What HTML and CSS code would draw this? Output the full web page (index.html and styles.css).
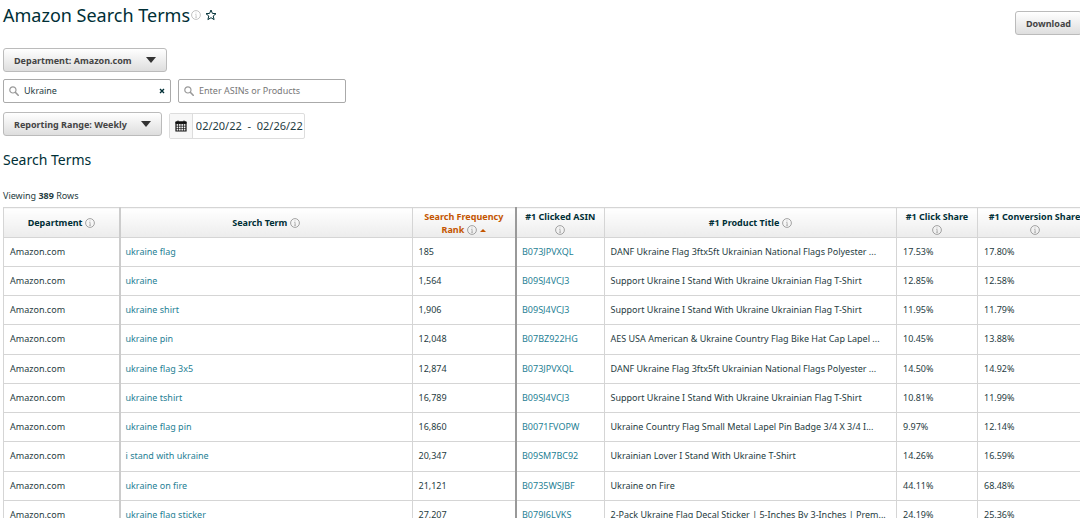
FILE: index.html
```
<!DOCTYPE html>
<html lang="en">
<head>
  <meta charset="UTF-8">
  <meta name="viewport" content="width=device-width, initial-scale=1.0">
  <title>Amazon Search Terms</title>
  <link rel="stylesheet" href="styles.css">
</head>
<body>
  <svg class="sprite" aria-hidden="true">
    <symbol id="info" viewBox="0 0 10 10">
      <circle cx="5" cy="5" r="4.4" fill="none" stroke="currentColor" stroke-width="0.9"/>
      <path d="M4.3 4.4H5.1V7.2M4.1 7.3H6M5 2.5V3.3" fill="none" stroke="currentColor" stroke-width="0.7"/>
    </symbol>
    <symbol id="search" viewBox="0 0 10 10">
      <circle cx="3.9" cy="3.9" r="3.1" fill="none" stroke="currentColor" stroke-width="1.2"/>
      <path d="M6.3 6.3L9.2 9.2" stroke="currentColor" stroke-width="1.6" stroke-linecap="round"/>
    </symbol>
  </svg>

  <div class="page">
    <header class="page-header">
      <div class="page-title">
        <h1>Amazon Search Terms</h1>
        <svg class="icon title-info"><use href="#info"/></svg>
        <svg class="star" viewBox="0 0 12 12"><path d="M6 1L7.4 4.4L11 4.7L8.2 7L9.1 10.6L6 8.7L2.9 10.6L3.8 7L1 4.7L4.6 4.4Z" fill="none" stroke="#002f36" stroke-width="1"/></svg>
      </div>
      <button class="button download" type="button">Download</button>
    </header>

    <div class="filters">
      <div class="filter-row">
        <button class="button dropdown" type="button">Department: Amazon.com <span class="caret"></span></button>
      </div>
      <div class="filter-row">
        <div class="search-box">
          <svg class="icon"><use href="#search"/></svg>
          <input type="text" aria-label="Search term" value="Ukraine">
          <button class="clear" type="button" aria-label="Clear"><svg viewBox="0 0 6 6"><path d="M1 1L5 5M5 1L1 5" stroke="#002f36" stroke-width="1.4"/></svg></button>
        </div>
        <div class="search-box">
          <svg class="icon"><use href="#search"/></svg>
          <input type="text" aria-label="ASINs or products" placeholder="Enter ASINs or Products">
        </div>
      </div>
      <div class="filter-row range-row">
        <button class="button dropdown" type="button">Reporting Range: Weekly <span class="caret"></span></button>
        <div class="date-range">
          <span class="calendar">
            <svg viewBox="0 0 12 12">
              <path d="M1 2H11V11H1Z" fill="none" stroke="#111" stroke-width="1.2"/>
              <path d="M1 2H11V3.6H1ZM3 0.5V2M9 0.5V2" fill="#111" stroke="#111"/>
              <path d="M1 6.2H11M1 8.6H11M3.5 4V11M6 4V11M8.5 4V11" stroke="#111" stroke-width="0.7"/>
            </svg>
          </span>
          <input type="text" aria-label="Date range" value="02/20/22  -  02/26/22">
        </div>
      </div>
    </div>

    <h2>Search Terms</h2>
    <p class="count">Viewing <b>389</b> Rows</p>

    <table class="terms">
      <colgroup>
        <col class="col-department">
        <col>
        <col class="col-rank">
        <col class="col-asin">
        <col>
        <col class="col-click">
        <col class="col-conversion">
      </colgroup>
      <thead>
        <tr>
          <th>Department <svg class="icon"><use href="#info"/></svg></th>
          <th>Search Term <svg class="icon"><use href="#info"/></svg></th>
          <th class="sorted">Search Frequency Rank <svg class="icon"><use href="#info"/></svg> <span class="sort-arrow"></span></th>
          <th>#1 Clicked ASIN <svg class="icon"><use href="#info"/></svg></th>
          <th>#1 Product Title <svg class="icon"><use href="#info"/></svg></th>
          <th>#1 Click Share <svg class="icon"><use href="#info"/></svg></th>
          <th>#1 Conversion Share <svg class="icon"><use href="#info"/></svg></th>
        </tr>
      </thead>
      <tbody>
        <tr>
          <td>Amazon.com</td>
          <td><a href="#">ukraine flag</a></td>
          <td>185</td>
          <td><a href="#">B073JPVXQL</a></td>
          <td>DANF Ukraine Flag 3ftx5ft Ukrainian National Flags Polyester ...</td>
          <td>17.53%</td>
          <td>17.80%</td>
        </tr>
        <tr>
          <td>Amazon.com</td>
          <td><a href="#">ukraine</a></td>
          <td>1,564</td>
          <td><a href="#">B09SJ4VCJ3</a></td>
          <td>Support Ukraine I Stand With Ukraine Ukrainian Flag T-Shirt</td>
          <td>12.85%</td>
          <td>12.58%</td>
        </tr>
        <tr>
          <td>Amazon.com</td>
          <td><a href="#">ukraine shirt</a></td>
          <td>1,906</td>
          <td><a href="#">B09SJ4VCJ3</a></td>
          <td>Support Ukraine I Stand With Ukraine Ukrainian Flag T-Shirt</td>
          <td>11.95%</td>
          <td>11.79%</td>
        </tr>
        <tr>
          <td>Amazon.com</td>
          <td><a href="#">ukraine pin</a></td>
          <td>12,048</td>
          <td><a href="#">B07BZ922HG</a></td>
          <td>AES USA American &amp; Ukraine Country Flag Bike Hat Cap Lapel ...</td>
          <td>10.45%</td>
          <td>13.88%</td>
        </tr>
        <tr>
          <td>Amazon.com</td>
          <td><a href="#">ukraine flag 3x5</a></td>
          <td>12,874</td>
          <td><a href="#">B073JPVXQL</a></td>
          <td>DANF Ukraine Flag 3ftx5ft Ukrainian National Flags Polyester ...</td>
          <td>14.50%</td>
          <td>14.92%</td>
        </tr>
        <tr>
          <td>Amazon.com</td>
          <td><a href="#">ukraine tshirt</a></td>
          <td>16,789</td>
          <td><a href="#">B09SJ4VCJ3</a></td>
          <td>Support Ukraine I Stand With Ukraine Ukrainian Flag T-Shirt</td>
          <td>10.81%</td>
          <td>11.99%</td>
        </tr>
        <tr>
          <td>Amazon.com</td>
          <td><a href="#">ukraine flag pin</a></td>
          <td>16,860</td>
          <td><a href="#">B0071FVOPW</a></td>
          <td>Ukraine Country Flag Small Metal Lapel Pin Badge 3/4 X 3/4 I...</td>
          <td>9.97%</td>
          <td>12.14%</td>
        </tr>
        <tr>
          <td>Amazon.com</td>
          <td><a href="#">i stand with ukraine</a></td>
          <td>20,347</td>
          <td><a href="#">B09SM7BC92</a></td>
          <td>Ukrainian Lover I Stand With Ukraine T-Shirt</td>
          <td>14.26%</td>
          <td>16.59%</td>
        </tr>
        <tr>
          <td>Amazon.com</td>
          <td><a href="#">ukraine on fire</a></td>
          <td>21,121</td>
          <td><a href="#">B0735WSJBF</a></td>
          <td>Ukraine on Fire</td>
          <td>44.11%</td>
          <td>68.48%</td>
        </tr>
        <tr>
          <td>Amazon.com</td>
          <td><a href="#">ukraine flag sticker</a></td>
          <td>27,207</td>
          <td><a href="#">B079J6LVKS</a></td>
          <td>2-Pack Ukraine Flag Decal Sticker | 5-Inches By 3-Inches | Prem...</td>
          <td>24.19%</td>
          <td>25.36%</td>
        </tr>
      </tbody>
    </table>
  </div>
</body>
</html>
```
FILE: styles.css
```
* {
  box-sizing: border-box;
}

body {
  margin: 0;
  background: #fff;
  color: #1f3c42;
  font-family: "Noto Sans", "Open Sans", sans-serif;
  font-size: 9px;
  line-height: 13px;
  overflow-x: hidden;
}

input,
button {
  font: inherit;
  color: inherit;
}

h1,
h2,
p {
  margin: 0;
  font-weight: 400;
}

.sprite {
  display: block;
  width: 0;
  height: 0;
}

/* the report is slightly wider than the window */
.page {
  margin-right: -12px;
  padding-left: 3px;
}

.icon {
  width: 10px;
  height: 10px;
  color: #999;
  vertical-align: -2px;
}

/* header */
.page-header {
  display: flex;
  justify-content: space-between;
  align-items: flex-start;
  height: 48px;
}

.page-title {
  display: flex;
  align-items: center;
  height: 30px;
}

h1 {
  color: #002f36;
  font-size: 18px;
  line-height: 24px;
}

.title-info {
  margin: 0 4px 0 1px;
  color: #bbb;
}

.star {
  width: 12px;
  height: 12px;
}

.button {
  display: flex;
  align-items: center;
  height: 24px;
  padding: 0 10px;
  border: 1px solid #bbb;
  border-radius: 3px;
  background: linear-gradient(#fff, #dedede);
  color: #444;
  font-weight: 700;
}

.download {
  margin: 11px 10px 0 0;
}

/* filters */
.filters {
  display: flex;
  flex-direction: column;
  gap: 7px;
}

.filter-row {
  display: flex;
  align-items: flex-start;
  gap: 7px;
}

.range-row {
  margin-top: 2px;
}

.caret {
  margin-left: 14px;
  border: 5px solid transparent;
  border-top: 6px solid #333;
  border-bottom: 0;
}

.search-box {
  display: flex;
  align-items: center;
  width: 168px;
  height: 24px;
  padding: 0 5px;
  border: 1px solid #aaa;
  border-radius: 2px;
}

.search-box input {
  flex: 1;
  min-width: 0;
  height: 20px;
  padding: 0 5px 1px;
  border: 0;
  outline: 0;
  background: none;
}

.search-box input::placeholder {
  color: #777;
}

.clear {
  display: flex;
  padding: 0;
  border: 0;
  background: none;
}

.clear svg {
  width: 6px;
  height: 6px;
}

.date-range {
  display: flex;
  width: 136px;
  height: 26px;
  margin-top: 1px;
  border: 1px solid #ddd;
  border-radius: 2px;
}

.calendar {
  display: flex;
  align-items: center;
  justify-content: center;
  width: 23px;
  border-right: 1px solid #ddd;
  background: #f7f7f7;
}

.calendar svg {
  width: 12px;
  height: 12px;
}

.date-range input {
  flex: 1;
  min-width: 0;
  height: 23px;
  padding: 0 0 0 3px;
  border: 0;
  background: none;
  font-size: 11px;
  white-space: pre;
}

h2 {
  margin-top: 11px;
  color: #002f36;
  font-size: 14px;
  line-height: 20px;
}

.count {
  margin: 19px 0 5px;
}

/* table */
.terms {
  width: 100%;
  table-layout: fixed;
  border-collapse: collapse;
}

.col-department { width: 116px; }
.col-rank { width: 104px; }
.col-asin { width: 88px; }
.col-click { width: 81px; }
.col-conversion { width: 114px; }

.terms th,
.terms td {
  border: 1px solid #d5d5d5;
}

.terms th {
  height: 30px;
  padding: 0 6px;
  background: linear-gradient(#fff, #ececec);
  color: #002f36;
}

.terms td {
  height: 29px;
  padding: 0 5px 2px 6px;
  overflow: hidden;
  white-space: nowrap;
}

.terms tbody tr:nth-child(4n) td {
  height: 30px;
}

.terms tr > :first-child {
  border-right: 2px solid #ccc;
}

.terms tr > :nth-child(3) {
  border-right: 2px solid #999;
}

.terms td:nth-child(2),
.terms td:nth-child(4) {
  padding-left: 5px;
}

.terms .sorted {
  color: #c45500;
}

.sort-arrow {
  display: inline-block;
  margin-left: 1px;
  border: 3px solid transparent;
  border-top: 0;
  border-bottom-color: #c45500;
  vertical-align: 1px;
}

a {
  color: #1f7f95;
  text-decoration: none;
}
```
